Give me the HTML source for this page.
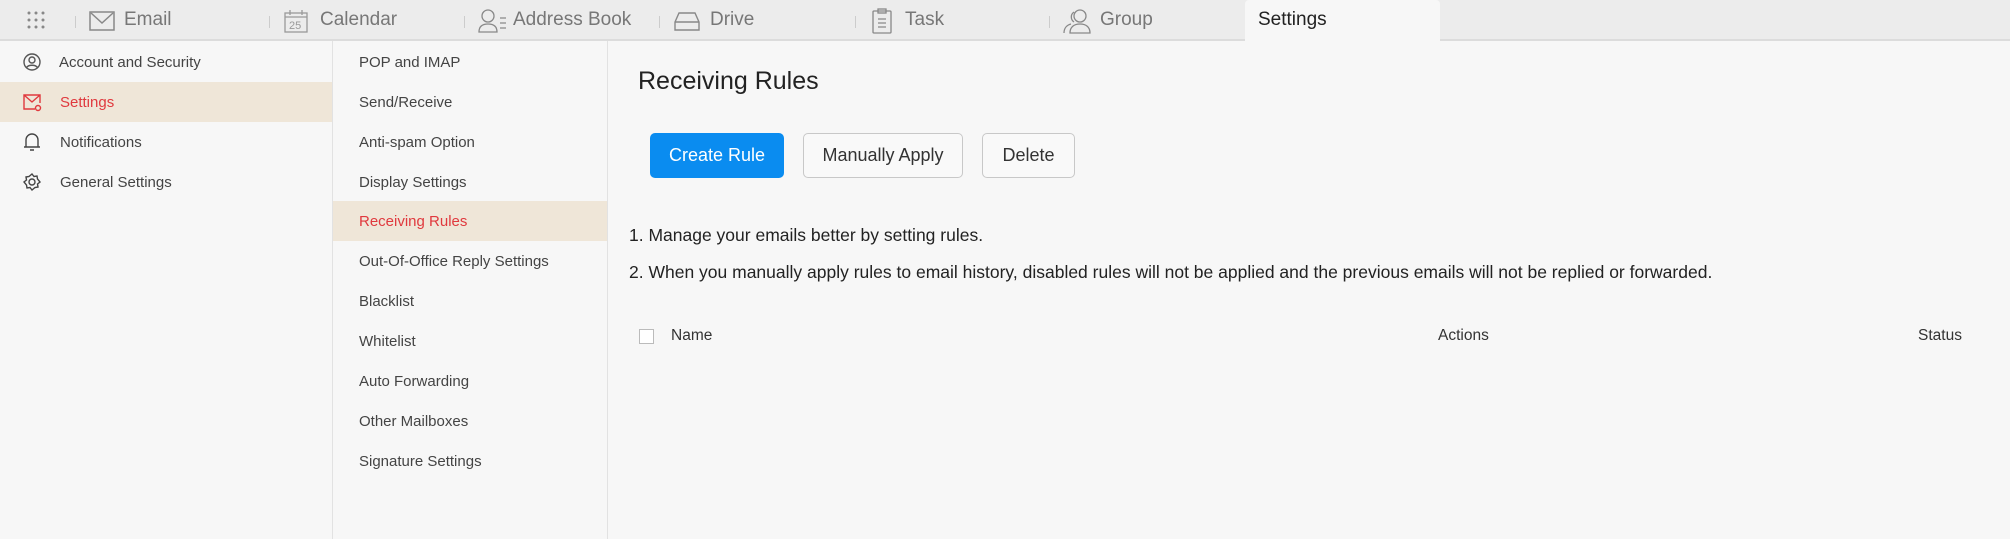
<!DOCTYPE html>
<html><head><meta charset="utf-8"><style>
*{margin:0;padding:0;box-sizing:border-box}
body{width:2010px;height:539px;overflow:hidden;background:#f7f7f7;font-family:"Liberation Sans",Arial,sans-serif;position:relative;color:#333}
.a{position:absolute;white-space:nowrap}
#top{position:absolute;left:0;top:0;width:2010px;height:41px;background:#ececec;border-bottom:2px solid #dcdcdc}
.tab{position:absolute;top:0;height:41px;line-height:40px;font-size:19px;color:#777}
.sep{position:absolute;top:16px;width:1px;height:12px;background:#ccc}
.ic{position:absolute;top:8px}
#stab{position:absolute;left:1245px;top:0;width:195px;height:41px;background:#f7f7f7;border-radius:4px 4px 0 0}
#c1{position:absolute;left:0;top:41px;width:333px;height:498px;border-right:1px solid #e2e2e2}
#c2{position:absolute;left:333px;top:41px;width:275px;height:498px;border-right:1px solid #e2e2e2}
.r{position:absolute;left:0;width:100%;height:40px;line-height:42px;font-size:15px;color:#444}
.sel{background:#efe6d8;color:#e0393e}
.btn{position:absolute;top:133px;height:45px;line-height:43px;text-align:center;font-size:18px;border:1px solid #c8c8c8;border-radius:5px;background:#f9f9f9;color:#333}
.t{font-size:17.5px;color:#222}
.h{font-size:15.5px;color:#333;top:327px}
</style></head><body>
<div id="top">
 <div id="stab"></div>
 <svg class="ic" style="left:26px;top:10px" width="20" height="20"><g fill="#888"><circle cx="3" cy="3" r="1.5"/><circle cx="10" cy="3" r="1.5"/><circle cx="17" cy="3" r="1.5"/><circle cx="3" cy="10" r="1.5"/><circle cx="10" cy="10" r="1.5"/><circle cx="17" cy="10" r="1.5"/><circle cx="3" cy="17" r="1.5"/><circle cx="10" cy="17" r="1.5"/><circle cx="17" cy="17" r="1.5"/></g></svg>
 <div class="sep" style="left:75px"></div><div class="sep" style="left:269px"></div><div class="sep" style="left:464px"></div><div class="sep" style="left:659px"></div><div class="sep" style="left:855px"></div><div class="sep" style="left:1049px"></div>
 <svg class="ic" style="left:89px;top:11px" width="26" height="20" fill="none" stroke="#888" stroke-width="1.5"><rect x="1" y="1" width="24" height="18"/><path d="M2 2l11 10 11-10"/></svg>
 <div class="tab" style="left:124px">Email</div>
 <svg class="ic" style="left:284px;top:9px" width="24" height="24" fill="none" stroke="#999" stroke-width="1.3"><rect x="1" y="4" width="22" height="19"/><path d="M6 1v5M18 1v5M1 8h22"/><text x="5" y="20" font-size="11" fill="#999" stroke="none" font-family="Liberation Sans">25</text></svg>
 <div class="tab" style="left:320px">Calendar</div>
 <svg class="ic" style="left:478px;top:9px" width="30" height="24" fill="none" stroke="#888" stroke-width="1.3"><circle cx="10" cy="7" r="6"/><path d="M1 23c0-6 4-8 9-8s9 2 9 8zM22 9h6M22 14h6M22 19h6"/></svg>
 <div class="tab" style="left:513px">Address Book</div>
 <svg class="ic" style="left:674px;top:11px" width="26" height="20" fill="none" stroke="#888" stroke-width="1.4"><path d="M1 11L5 2h16l4 9v8H1zM1 11h24"/></svg>
 <div class="tab" style="left:710px">Drive</div>
 <svg class="ic" style="left:872px;top:8px" width="20" height="26" fill="none" stroke="#888" stroke-width="1.3"><rect x="1" y="3" width="18" height="22" rx="1"/><rect x="6" y="1" width="8" height="4"/><path d="M6 11h8M6 15h8M6 19h8"/></svg>
 <div class="tab" style="left:905px">Task</div>
 <svg class="ic" style="left:1062px;top:8px" width="32" height="26" fill="none" stroke="#888" stroke-width="1.3"><circle cx="18" cy="8" r="6"/><path d="M8 25c0-6 4-9 10-9s10 3 10 9zM12 4a6 6 0 0 0 0 10M2 25c0-5 3-8 7-9"/></svg>
 <div class="tab" style="left:1100px">Group</div>
 <div class="tab" style="left:1258px;color:#222">Settings</div>
</div>
<div id="c1">
 <div class="r" style="top:1px"><svg class="a" style="left:23px;top:11px" width="18" height="18" fill="none" stroke="#555" stroke-width="1.4"><circle cx="9" cy="9" r="8"/><circle cx="9" cy="7" r="3"/><path d="M3.5 14.5c2-3 9-3 11 0"/></svg><span class="a" style="left:59px">Account and Security</span></div>
 <div class="r sel" style="top:41px"><svg class="a" style="left:23px;top:12px" width="20" height="18" fill="none" stroke="#e0393e" stroke-width="1.4"><path d="M12 15H1V1h16v8M1 1l8 7 8-7"/><circle cx="15" cy="14" r="2.5"/></svg><span class="a" style="left:60px">Settings</span></div>
 <div class="r" style="top:81px"><svg class="a" style="left:23px;top:10px" width="18" height="20" fill="none" stroke="#444" stroke-width="1.4"><path d="M3 15V8a6 6 0 0 1 12 0v7h2H1h2M7 18h4"/></svg><span class="a" style="left:60px">Notifications</span></div>
 <div class="r" style="top:121px"><svg class="a" style="left:23px;top:11px" width="18" height="18" fill="none" stroke="#444" stroke-width="1.4"><path d="M9 1l2 2.5 3-.5.5 3L17 9l-2.5 2 .5 3-3 .5L9 17l-2-2.5-3 .5-.5-3L1 9l2.5-2L3 4l3-.5z"/><circle cx="9" cy="9" r="3"/></svg><span class="a" style="left:60px">General Settings</span></div>
</div>
<div id="c2">
 <div class="r" style="top:1px"><span class="a" style="left:26px">POP and IMAP</span></div>
 <div class="r" style="top:41px"><span class="a" style="left:26px">Send/Receive</span></div>
 <div class="r" style="top:81px"><span class="a" style="left:26px">Anti-spam Option</span></div>
 <div class="r" style="top:121px"><span class="a" style="left:26px">Display Settings</span></div>
 <div class="r sel" style="top:160px"><span class="a" style="left:26px">Receiving Rules</span></div>
 <div class="r" style="top:200px"><span class="a" style="left:26px">Out-Of-Office Reply Settings</span></div>
 <div class="r" style="top:240px"><span class="a" style="left:26px">Blacklist</span></div>
 <div class="r" style="top:280px"><span class="a" style="left:26px">Whitelist</span></div>
 <div class="r" style="top:320px"><span class="a" style="left:26px">Auto Forwarding</span></div>
 <div class="r" style="top:360px"><span class="a" style="left:26px">Other Mailboxes</span></div>
 <div class="r" style="top:400px"><span class="a" style="left:26px">Signature Settings</span></div>
</div>
<div class="a" style="left:638px;top:67px;font-size:25px;color:#222">Receiving Rules</div>
<div class="btn" style="left:650px;width:134px;background:#0a8cf0;border-color:#0a8cf0;color:#fff">Create Rule</div>
<div class="btn" style="left:803px;width:160px">Manually Apply</div>
<div class="btn" style="left:982px;width:93px">Delete</div>
<div class="a t" style="left:629px;top:225px">1. Manage your emails better by setting rules.</div>
<div class="a t" style="left:629px;top:262px">2. When you manually apply rules to email history, disabled rules will not be applied and the previous emails will not be replied or forwarded.</div>
<div class="a" style="left:639px;top:329px;width:15px;height:15px;border:1px solid #bbb;background:#fff"></div>
<div class="a h" style="left:671px">Name</div>
<div class="a h" style="left:1438px">Actions</div>
<div class="a h" style="left:1918px">Status</div>
</body></html>
